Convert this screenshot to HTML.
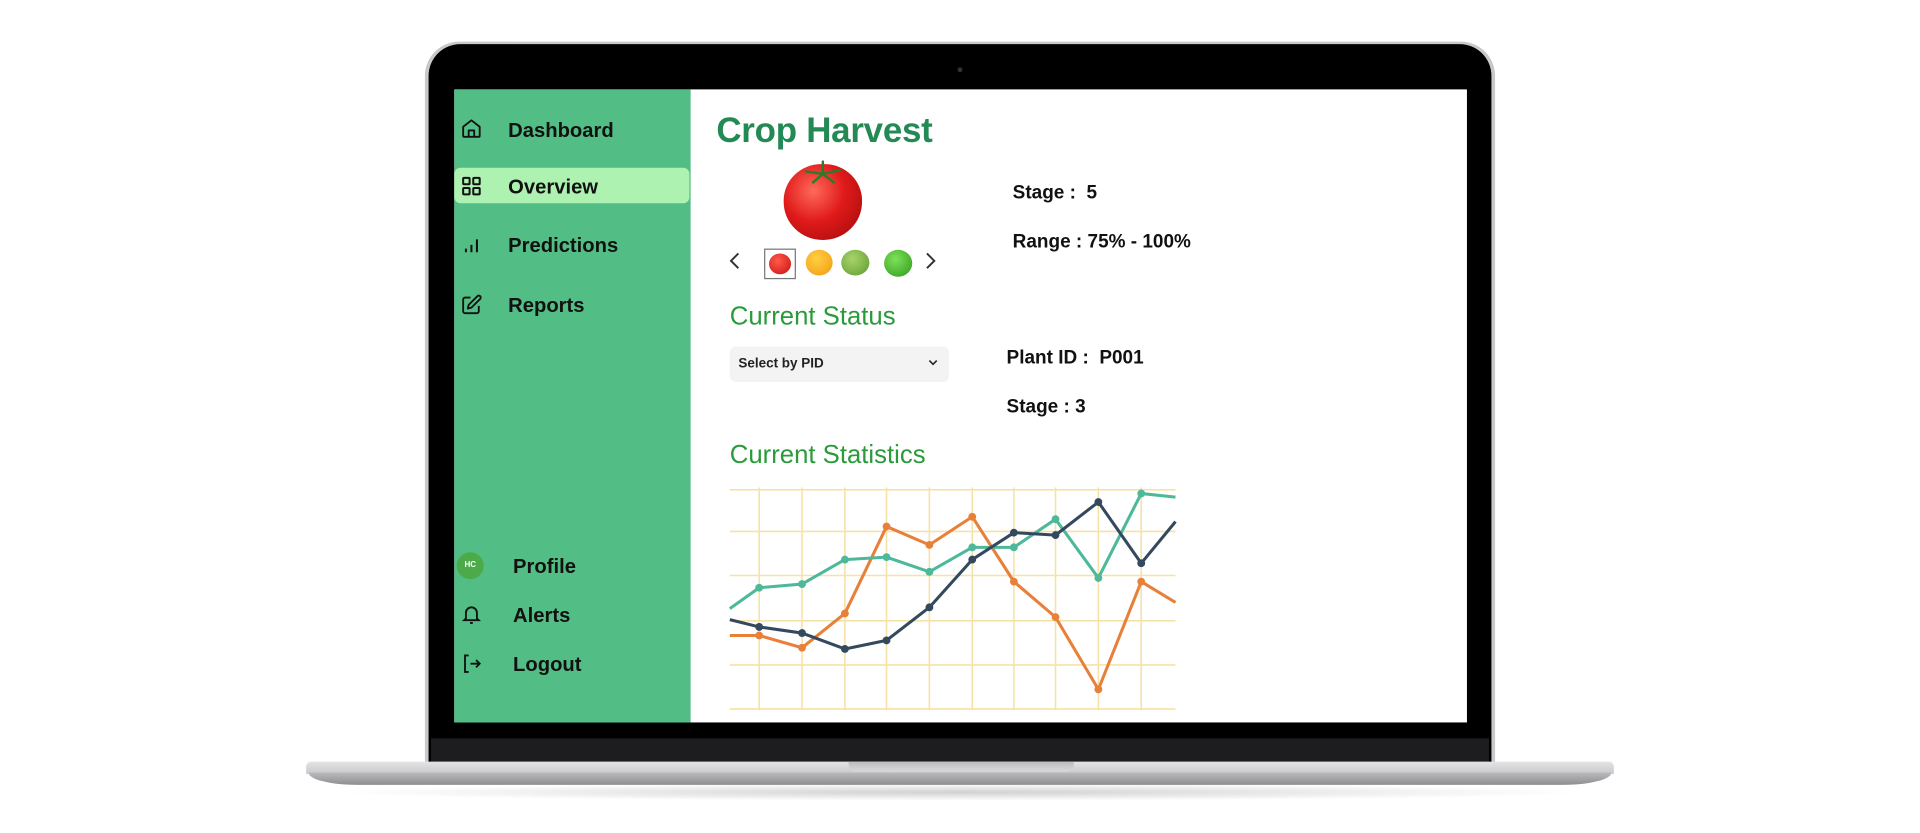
<!DOCTYPE html>
<html><head><meta charset="utf-8"><style>
*{margin:0;padding:0;box-sizing:border-box}
html,body{width:1920px;height:832px;overflow:hidden;background:#fff;font-family:"Liberation Sans",sans-serif}
#w{position:absolute;left:0;top:0;width:1568px;height:680px;transform:scale(1.22449);transform-origin:0 0}
.a{position:absolute}
.nav{position:absolute;font-size:16.5px;font-weight:bold;color:#111;line-height:20px}
.ic{position:absolute;width:18px;height:18px}
.lbl{position:absolute;font-size:15.5px;font-weight:bold;color:#111;white-space:pre}
.h2{position:absolute;font-size:21px;color:#2a9a3a}
</style></head><body><div id="w">
<div class="a" style="left:270px;top:640px;width:1028px;height:14px;border-radius:50%;background:radial-gradient(ellipse at center,rgba(0,0,0,.18),rgba(0,0,0,0) 70%)"></div>
<div class="a" style="left:347px;top:34px;width:874px;height:600px;border-radius:28px 28px 6px 6px;background:#c9c9cb"></div>
<div class="a" style="left:350px;top:36px;width:868px;height:596px;border-radius:26px 26px 4px 4px;background:#000"></div>
<div class="a" style="left:782px;top:55px;width:4px;height:4px;border-radius:50%;background:#333"></div>
<div class="a" style="left:352px;top:603px;width:864px;height:20px;background:#1d1d1f"></div>
<div class="a" style="left:250px;top:622px;width:1068px;height:10px;background:linear-gradient(#e4e4e6,#c8c8ca);border-radius:4px 4px 0 0"></div>
<div class="a" style="left:252px;top:631px;width:1064px;height:10px;background:linear-gradient(#b9b9bb,#8e8e90);border-radius:0 0 40px 40px/0 0 10px 10px"></div>
<div class="a" style="left:693px;top:622px;width:184px;height:8px;background:linear-gradient(#bdbdbf,#d9d9db);border-radius:0 0 6px 6px"></div>
<div class="a" style="left:371px;top:73px;width:827px;height:517px;background:#fff"></div>
<div class="a" style="left:371px;top:73px;width:193px;height:517px;background:#52bd84"></div>
<div class="a" style="left:371px;top:137px;width:192px;height:29px;border-radius:5px;background:#adf2b1"></div>

<svg class="ic" style="left:376px;top:96px" viewBox="0 0 24 24" fill="none" stroke="#111" stroke-width="2" stroke-linejoin="round"><path d="M3 10l9-7 9 7v10a1 1 0 0 1-1 1H4a1 1 0 0 1-1-1z"/><path d="M9 21v-7h6v7"/></svg>
<div class="nav" style="left:415px;top:97px">Dashboard</div>
<svg class="ic" style="left:376px;top:143px" viewBox="0 0 24 24" fill="none" stroke="#111" stroke-width="2.2"><rect x="3" y="3" width="7" height="7" rx="1"/><rect x="14" y="3" width="7" height="7" rx="1"/><rect x="3" y="14" width="7" height="7" rx="1"/><rect x="14" y="14" width="7" height="7" rx="1"/></svg>
<div class="nav" style="left:415px;top:143px">Overview</div>
<svg class="ic" style="left:376px;top:191px" viewBox="0 0 24 24" fill="none" stroke="#111" stroke-width="2.2"><path d="M6 20v-4M12 20v-8M18 20V6"/></svg>
<div class="nav" style="left:415px;top:191px">Predictions</div>
<svg class="ic" style="left:376px;top:240px" viewBox="0 0 24 24" fill="none" stroke="#111" stroke-width="2" stroke-linejoin="round"><path d="M11 4H5a2 2 0 0 0-2 2v13a2 2 0 0 0 2 2h13a2 2 0 0 0 2-2v-6"/><path d="M18.5 2.5a2.1 2.1 0 0 1 3 3L12 15l-4 1 1-4z"/></svg>
<div class="nav" style="left:415px;top:240px">Reports</div>

<div class="a" style="left:373px;top:451px;width:22px;height:22px;border-radius:50%;background:#4caa48;color:#fff;font-size:6.5px;font-weight:bold;text-align:center;line-height:22px">HC</div>
<div class="nav" style="left:419px;top:453px">Profile</div>
<svg class="ic" style="left:376px;top:493px" viewBox="0 0 24 24" fill="none" stroke="#111" stroke-width="2"><path d="M6 16V10a6 6 0 0 1 12 0v6l2 2H4z"/><path d="M10.5 21h3"/></svg>
<div class="nav" style="left:419px;top:493px">Alerts</div>
<svg class="ic" style="left:376px;top:533px" viewBox="0 0 24 24" fill="none" stroke="#111" stroke-width="2"><path d="M9 3H5v18h4"/><path d="M11 12h10M17 8l4 4-4 4"/></svg>
<div class="nav" style="left:419px;top:533px">Logout</div>

<div class="a" style="left:585px;top:91px;font-size:28.5px;font-weight:bold;color:#248a55;letter-spacing:-.2px">Crop Harvest</div>
<div class="a" style="left:640px;top:134px;width:64px;height:62px;border-radius:48% 48% 50% 50%;background:radial-gradient(circle at 38% 35%,#ff6a5a,#e01a1a 45%,#a80c0c 90%)"></div>
<svg class="a" style="left:652px;top:130px" width="40" height="24" viewBox="0 0 40 24"><path d="M20 12L6 10M20 12l14-3M20 12L12 19M20 12l9 7M20 12V2" stroke="#2d7a2a" stroke-width="2" fill="none" stroke-linecap="round"/></svg>
<svg class="a" style="left:594px;top:205px" width="12" height="16" viewBox="0 0 12 16"><path d="M9 2L3 8l6 6" stroke="#333" stroke-width="1.6" fill="none"/></svg>
<svg class="a" style="left:754px;top:205px" width="12" height="16" viewBox="0 0 12 16"><path d="M3 2l6 6-6 6" stroke="#333" stroke-width="1.6" fill="none"/></svg>
<div class="a" style="left:624px;top:203px;width:26px;height:25px;border:1px solid #777"></div>
<div class="a" style="left:628px;top:207px;width:18px;height:17px;border-radius:50%;background:radial-gradient(circle at 40% 35%,#ff5a4a,#c81010)"></div>
<div class="a" style="left:658px;top:204px;width:22px;height:21px;border-radius:50%;background:radial-gradient(circle at 40% 35%,#ffcf40,#f09a10)"></div>
<div class="a" style="left:687px;top:204px;width:23px;height:21px;border-radius:50%;background:radial-gradient(circle at 40% 35%,#a8d46a,#5e9a30)"></div>
<div class="a" style="left:722px;top:204px;width:23px;height:22px;border-radius:50%;background:radial-gradient(circle at 40% 35%,#7ee05a,#2e9a1a)"></div>

<div class="lbl" style="left:827px;top:149px">Stage :  5</div>
<div class="lbl" style="left:827px;top:189px">Range : 75% - 100%</div>

<div class="h2" style="left:596px;top:247px">Current Status</div>
<div class="a" style="left:596px;top:283px;width:179px;height:29px;border-radius:5px;background:#f3f3f3"></div>
<div class="a" style="left:603px;top:291px;font-size:11px;font-weight:bold;color:#222">Select by PID</div>
<svg class="a" style="left:758px;top:293px" width="8" height="6" viewBox="0 0 8 6"><path d="M1 1.5l3 3 3-3" stroke="#222" stroke-width="1.3" fill="none"/></svg>
<div class="lbl" style="left:822px;top:284px">Plant ID :  P001</div>
<div class="lbl" style="left:822px;top:324px">Stage : 3</div>

<div class="h2" style="left:596px;top:360px">Current Statistics</div>
<svg class="a" style="left:0;top:0" width="1568" height="680">
<g stroke="#f7e2a6" stroke-width="1.3">
<path d="M620 398V580M655 398V580M690 398V580M724 398V580M759 398V580M794 398V580M828 398V580M862 398V580M897 398V580M932 398V580"/>
<path d="M596 400H960M596 434H960M596 470H960M596 507H960M596 543H960M596 579H960"/>
</g>
<g fill="none" stroke-width="2.5" stroke-linejoin="round">
<polyline stroke="#e8803a" points="596,519 620,519 655,529 690,501 724,430 759,445 794,422 828,475 862,504 897,563 932,475 960,492"/>
<polyline stroke="#4db89a" points="596,497 620,480 655,477 690,457 724,455 759,467 794,447 828,447 862,424 897,472 932,403 960,406"/>
<polyline stroke="#34495e" points="596,506 620,512 655,517 690,530 724,523 759,496 794,457 828,435 862,437 897,410 932,460 960,426"/>
</g>
<g fill="#e8803a"><circle cx="620" cy="519" r="3.2"/><circle cx="655" cy="529" r="3.2"/><circle cx="690" cy="501" r="3.2"/><circle cx="724" cy="430" r="3.2"/><circle cx="759" cy="445" r="3.2"/><circle cx="794" cy="422" r="3.2"/><circle cx="828" cy="475" r="3.2"/><circle cx="862" cy="504" r="3.2"/><circle cx="897" cy="563" r="3.2"/><circle cx="932" cy="475" r="3.2"/></g>
<g fill="#4db89a"><circle cx="620" cy="480" r="3.2"/><circle cx="655" cy="477" r="3.2"/><circle cx="690" cy="457" r="3.2"/><circle cx="724" cy="455" r="3.2"/><circle cx="759" cy="467" r="3.2"/><circle cx="794" cy="447" r="3.2"/><circle cx="828" cy="447" r="3.2"/><circle cx="862" cy="424" r="3.2"/><circle cx="897" cy="472" r="3.2"/><circle cx="932" cy="403" r="3.2"/></g>
<g fill="#34495e"><circle cx="620" cy="512" r="3.2"/><circle cx="655" cy="517" r="3.2"/><circle cx="690" cy="530" r="3.2"/><circle cx="724" cy="523" r="3.2"/><circle cx="759" cy="496" r="3.2"/><circle cx="794" cy="457" r="3.2"/><circle cx="828" cy="435" r="3.2"/><circle cx="862" cy="437" r="3.2"/><circle cx="897" cy="410" r="3.2"/><circle cx="932" cy="460" r="3.2"/></g>
</svg>
</div></body></html>
